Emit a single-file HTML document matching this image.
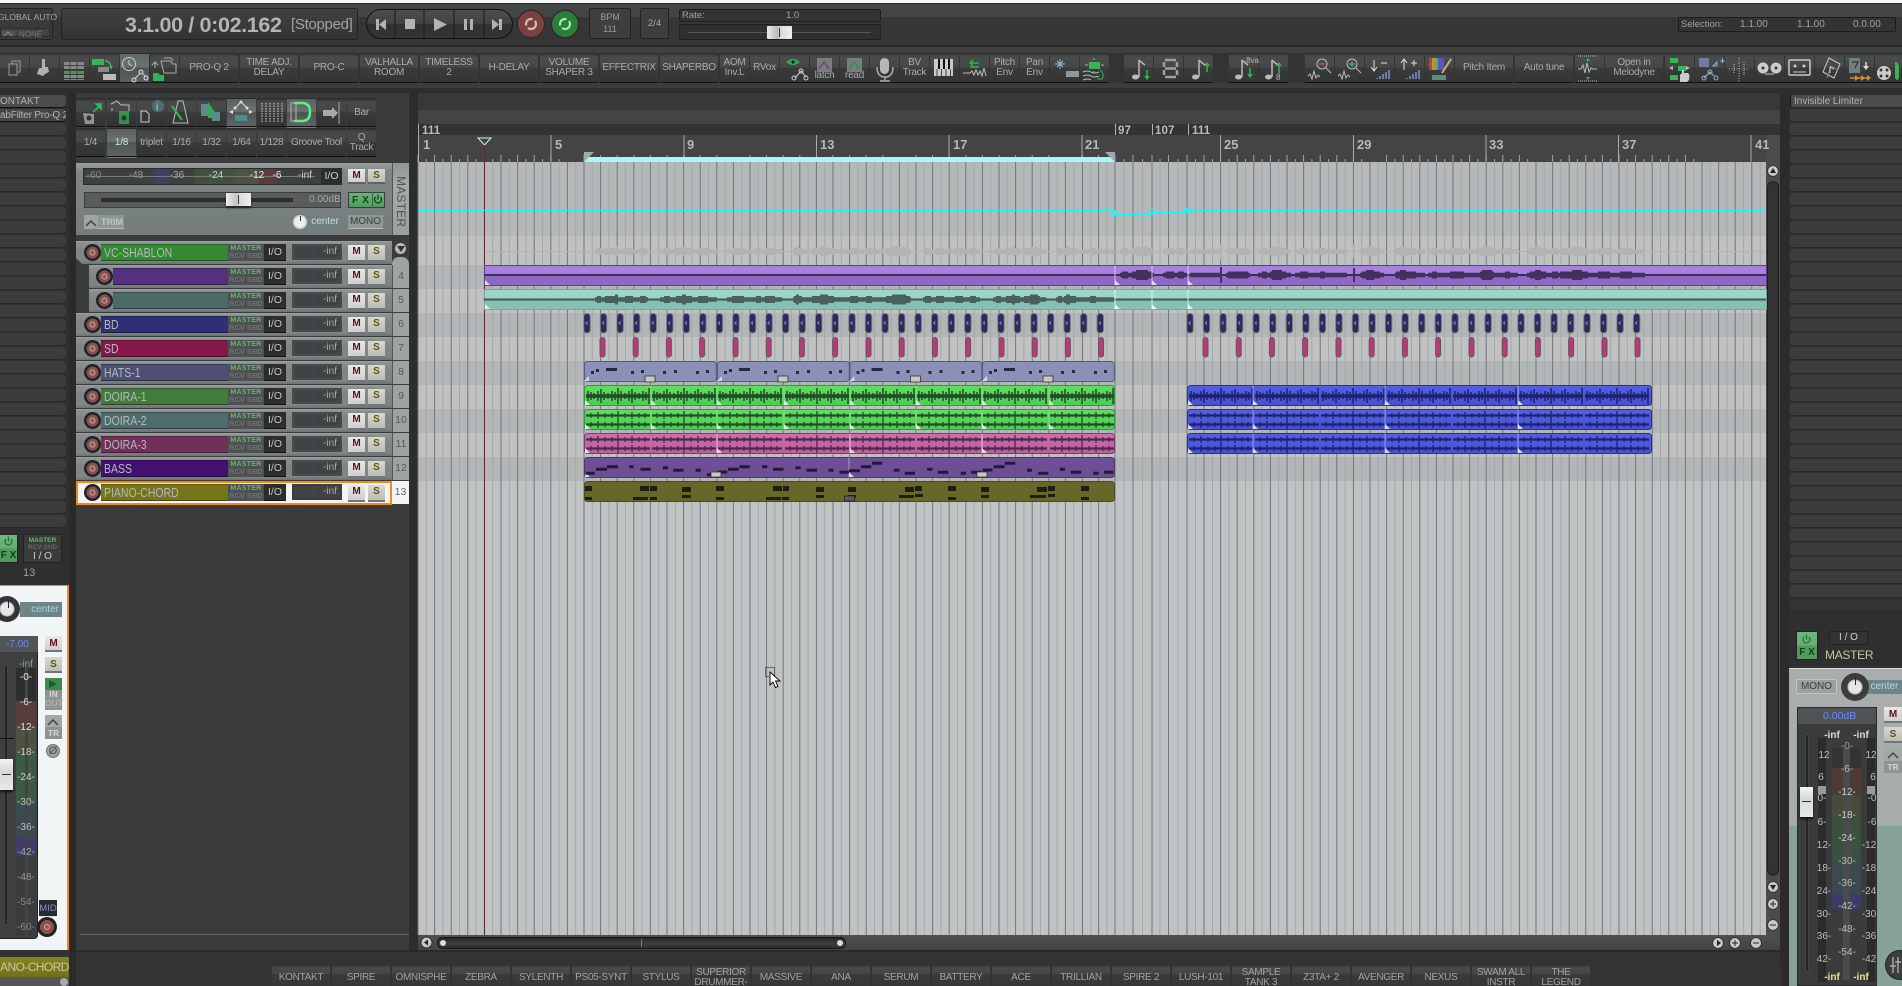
<!DOCTYPE html>
<html><head><meta charset="utf-8"><title>REAPER</title>
<style>
html,body{margin:0;padding:0;background:#333}
#p{position:relative;width:1902px;height:986px;overflow:hidden;background:#333;font-family:"Liberation Sans",sans-serif;color:#a5a8a8}
.a,.t,.b,.r,.g{position:absolute;box-sizing:border-box}
.t{top:53px;height:30px;width:29px;background:linear-gradient(#3a3b3b 0,#4a4c4c 12%,#464848 46%,#3a3b3b 50%,#343535 100%);border-bottom:1px solid #111;border-top:1px solid #2a2a2a;font-size:10px;line-height:10px;letter-spacing:-.25px;text-align:center;display:flex;align-items:center;justify-content:center;white-space:pre;color:#a8acac}
.w{width:58px}
.on{background:linear-gradient(#626868,#6b7272 46%,#4f5454 50%,#5a6060)}
.u{height:29px;background:linear-gradient(#353636 0,#484a4a 12%,#454747 46%,#393a3a 50%,#333 100%);top:98px}
.u.on{background:linear-gradient(#5a6060,#6b7272 46%,#4f5454 50%,#5e6464);box-shadow:0 1px 0 #777}
.v{top:128px}
.b{top:965px;height:24px;width:58px;background:linear-gradient(#2e2e2e 0,#4a4a4a 10%,#454545 35%,#3a3a3a 40%,#363636);font-size:10px;line-height:10px;letter-spacing:-.3px;text-align:center;color:#a0a3a3;padding-top:3px;white-space:pre}
.b1{padding-top:8px}
.r{left:76px;width:333px;height:23px;background:linear-gradient(#9da2a2 0,#8a9090 10%,#7e8484 50%,#818787 85%,#6c7171 100%)}
.k{position:absolute;left:8px;top:3px;width:17px;height:17px;border-radius:50%;background:radial-gradient(circle,#8b5a5a 0 2px,#c8a0a0 2px 3px,#8a4f4f 3px 6px,#222 6px 8.5px)}
.n{position:absolute;left:25px;top:3px;width:127px;height:17px;font-size:12.5px;line-height:17px;padding-left:3px;color:#b4baba;box-sizing:border-box;border-top:1px solid rgba(0,0,0,.25);border-bottom:1px solid rgba(0,0,0,.4);white-space:nowrap}
.n span{display:inline-block;transform:scaleX(.84);transform-origin:left}
.o{position:absolute;left:152px;top:3px;width:36px;height:17px;background:#4d5151;font-size:7px;line-height:7.5px;text-align:center;color:#63b56f;font-weight:bold;letter-spacing:.3px;padding-top:1px;box-sizing:border-box}
.o i{font-style:normal;color:#6e7272;display:block}
.i{position:absolute;left:188px;top:3px;width:22px;height:16px;background:#2d2d2d;color:#c8cccc;font-size:10.5px;line-height:16px;text-align:center;border-bottom:1px solid #111}
.e{position:absolute;left:216px;top:3px;width:50px;height:16px;background:linear-gradient(90deg,#3f4343 0 40%,#444064 40% 46%,#3f4343 46% 70%,#503f3f 70% 74%,#3f4343 74%);border:2px solid #484c4c;border-left-width:3px;box-sizing:border-box;color:#aaa;font-size:10px;line-height:11px;text-align:right;padding-right:3px}
.m,.s{position:absolute;top:4px;width:17px;height:15px;background:linear-gradient(#e8e8e8,#cfcfcf);border-bottom:2px solid #70767a;color:#5d1414;font-weight:bold;font-size:10px;line-height:14px;text-align:center}
.m{left:272px}
.s{left:292px;color:#55561a;background:linear-gradient(#d8d8d0,#bcbcb6)}
.q{position:absolute;left:316px;top:0;width:17px;height:23px;background:#9ea3a3;border-left:1px solid #555;color:#555a5a;font-size:10.5px;line-height:23px;text-align:center;box-sizing:border-box}
.d{position:absolute;left:0;top:0;width:13px;height:24px;background:#3a3b3b}
.g{left:0;width:66px;height:13px;background:#3c3c3c;border-radius:0 4px 4px 0;border-bottom:1px solid #2a2a2a}
.h{position:absolute;box-sizing:border-box;left:1790px;width:112px;height:13px;background:#3c3c3c;border-radius:3px 0 0 3px;border-bottom:1px solid #2a2a2a}
.l{position:absolute;font-size:10px;color:#bdbdbd;white-space:nowrap;transform:translateX(-50%);line-height:10px}
svg{position:absolute;left:0;top:0}
</style></head><body><div id="p">

<!-- top bands -->
<div class="a" style="left:0;top:0;width:1902px;height:3px;background:#f6f7f7"></div>
<div class="a" style="left:0;top:3px;width:1902px;height:1px;background:#222"></div>
<div class="a" style="left:0;top:4px;width:1902px;height:13px;background:#444645"></div>
<div class="a" style="left:0;top:17px;width:1902px;height:28px;background:#363636"></div>
<div class="a" style="left:0;top:45px;width:1902px;height:2px;background:#2b2b2b"></div>
<div class="a" style="left:0;top:47px;width:1902px;height:6px;background:#404040"></div>
<div class="a" style="left:0;top:83px;width:1902px;height:5px;background:#3c3c3c"></div>
<div class="a" style="left:0;top:88px;width:1902px;height:5px;background:#2d2d2d"></div>

<!-- transport -->
<div class="a" style="left:-4px;top:8px;width:57px;height:32px;background:#3a3a3a;border:1px solid #222;border-radius:3px"></div>
<div class="a" style="left:-2px;top:12px;font-size:8.5px;line-height:10px;color:#a5a8a8;white-space:nowrap">GLOBAL AUTO</div>
<div class="a" style="left:0;top:28px;width:50px;height:9px;background:#444;border:1px solid #2b2b2b"></div>
<div class="a" style="left:19px;top:31px;font-size:8px;color:#777;line-height:8px">NONE</div>
<div class="a" style="left:61px;top:8px;width:297px;height:32px;background:linear-gradient(#3f4040,#3a3b3b 50%,#333);border:1px solid #222;border-radius:3px"></div>
<div class="a" style="left:125px;top:13px;font-size:21.5px;line-height:24px;font-weight:bold;color:#b2b5b5;letter-spacing:-.35px;white-space:nowrap">3.1.00 / 0:02.162</div>
<div class="a" style="left:291px;top:15px;font-size:15px;line-height:20px;color:#a0a3a3;letter-spacing:-.3px;white-space:nowrap">[Stopped]</div>
<div class="a" style="left:366px;top:9px;width:147px;height:30px;border-radius:15px;background:linear-gradient(#4d4f4f,#414343 48%,#2f3030 52%,#343535);border:1px solid #111"></div>
<div class="a" style="left:589px;top:8px;width:42px;height:31px;background:#3d3e3e;border:1px solid #222;border-radius:2px;font-size:9px;line-height:12px;text-align:center;padding-top:2px;color:#9a9d9d;box-sizing:border-box">BPM<br>111</div>
<div class="a" style="left:640px;top:8px;width:29px;height:31px;background:#3d3e3e;border:1px solid #222;border-radius:2px;font-size:9.5px;line-height:29px;text-align:center;color:#a5a8a8;box-sizing:border-box">2/4</div>
<div class="a" style="left:679px;top:9px;width:202px;height:13px;background:#333;border:1px solid #1f1f1f;border-radius:2px"></div>
<div class="a" style="left:682px;top:10px;font-size:9.5px;line-height:11px;color:#a0a3a3">Rate:</div>
<div class="a" style="left:786px;top:10px;font-size:9.5px;line-height:11px;color:#a0a3a3">1.0</div>
<div class="a" style="left:679px;top:24px;width:202px;height:16px;background:#303030;border:1px solid #1f1f1f;border-radius:2px"></div>
<div class="a" style="left:688px;top:32px;width:183px;height:1px;background:#555"></div>
<div class="a" style="left:767px;top:26px;width:25px;height:13px;background:linear-gradient(90deg,#eee,#bbb 40%,#ddd 60%,#eee);border-radius:1px"></div>
<div class="a" style="left:779px;top:28px;width:1px;height:9px;background:#333"></div>
<div class="a" style="left:1678px;top:17px;width:218px;height:15px;background:#333;border:1px solid #1d1d1d;border-radius:2px"></div>
<div class="a" style="left:1681px;top:19px;font-size:9.5px;line-height:11px;color:#a0a3a3">Selection:</div>
<div class="a" style="left:1740px;top:19px;font-size:10px;line-height:11px;color:#a0a3a3">1.1.00</div>
<div class="a" style="left:1797px;top:19px;font-size:10px;line-height:11px;color:#a0a3a3">1.1.00</div>
<div class="a" style="left:1853px;top:19px;font-size:10px;line-height:11px;color:#a0a3a3">0.0.00</div>

<!-- main toolbar -->
<div class="t" style="left:0"></div><div class="t" style="left:30px"></div><div class="t" style="left:60px"></div><div class="t" style="left:90px"></div><div class="t on" style="left:120px"></div><div class="t" style="left:150px"></div>
<div class="t w" style="left:180px">PRO-Q 2</div><div class="t w" style="left:240px">TIME ADJ.
DELAY</div><div class="t w" style="left:300px">PRO-C</div><div class="t w" style="left:360px">VALHALLA
ROOM</div><div class="t w" style="left:420px">TIMELESS
2</div><div class="t w" style="left:480px">H-DELAY</div><div class="t w" style="left:540px">VOLUME
SHAPER 3</div><div class="t w" style="left:600px">EFFECTRIX</div><div class="t w" style="left:660px">SHAPERBO</div>
<div class="t" style="left:720px">AOM
Inv.L</div><div class="t" style="left:750px">RVox</div><div class="t" style="left:780px"></div>
<div class="t" style="left:810px;align-items:flex-end;padding-bottom:1px">latch</div><div class="t" style="left:840px;align-items:flex-end;padding-bottom:1px">read</div><div class="t" style="left:870px"></div><div class="t" style="left:900px">BV
Track</div><div class="t" style="left:930px"></div><div class="t" style="left:960px"></div><div class="t" style="left:990px">Pitch
Env</div><div class="t" style="left:1020px">Pan
Env</div><div class="t" style="left:1050px"></div><div class="t" style="left:1080px"></div>
<div class="t" style="left:1124px"></div><div class="t" style="left:1154px"></div><div class="t" style="left:1184px"></div>
<div class="t" style="left:1229px"></div><div class="t" style="left:1259px"></div>
<div class="t" style="left:1305px"></div><div class="t" style="left:1335px"></div><div class="t" style="left:1365px"></div><div class="t" style="left:1395px"></div><div class="t" style="left:1425px"></div>
<div class="t w" style="left:1455px">Pitch Item</div><div class="t w" style="left:1515px">Auto tune</div><div class="t" style="left:1575px"></div><div class="t w" style="left:1605px">Open in
Melodyne</div>
<div class="t" style="left:1665px"></div><div class="t" style="left:1695px"></div><div class="t" style="left:1725px"></div><div class="t" style="left:1755px"></div><div class="t" style="left:1785px"></div><div class="t" style="left:1815px"></div><div class="t" style="left:1845px"></div><div class="t" style="left:1875px"></div>

<!-- left fx list -->
<div class="a" style="left:0;top:93px;width:76px;height:441px;background:#2f2f2f"></div>
<div class="g" style="top:95px;background:#4a4c4c;font-size:10px;line-height:13px;color:#b0b3b3;border-bottom:1px solid #111;white-space:nowrap;overflow:hidden">ONTAKT</div>
<div class="g" style="top:109px;background:#454747;font-size:10px;line-height:13px;color:#b0b3b3;border-bottom:1px solid #111;white-space:nowrap;overflow:hidden;letter-spacing:-.2px">abFilter Pro-Q 2</div>
<div class="g" style="top:123px"></div><div class="g" style="top:137px"></div><div class="g" style="top:151px"></div><div class="g" style="top:165px"></div><div class="g" style="top:179px"></div><div class="g" style="top:193px"></div><div class="g" style="top:207px"></div><div class="g" style="top:221px"></div><div class="g" style="top:235px"></div><div class="g" style="top:249px"></div><div class="g" style="top:263px"></div><div class="g" style="top:277px"></div><div class="g" style="top:291px"></div><div class="g" style="top:305px"></div><div class="g" style="top:319px"></div><div class="g" style="top:333px"></div><div class="g" style="top:347px"></div><div class="g" style="top:361px"></div><div class="g" style="top:375px"></div><div class="g" style="top:389px"></div><div class="g" style="top:403px"></div><div class="g" style="top:417px"></div><div class="g" style="top:431px"></div><div class="g" style="top:445px"></div><div class="g" style="top:459px"></div><div class="g" style="top:473px"></div><div class="g" style="top:487px"></div><div class="g" style="top:501px"></div><div class="g" style="top:515px"></div>

<!-- left strip -->
<div class="a" style="left:0;top:530px;width:68px;height:55px;background:#2f2f2f"></div>
<div class="a" style="left:0;top:534px;width:18px;height:29px;background:linear-gradient(#6fb77a 0,#68ad72 50%,#4f9c5e 50%);border:1px solid #222;border-left:0;font-size:10px;line-height:13px;color:#123f1c;text-align:center;font-weight:bold;box-sizing:border-box;padding-top:14px">F X</div>
<div class="a" style="left:23px;top:534px;width:39px;height:29px;background:#3a3c3c;border:1px solid #222;box-sizing:border-box;text-align:center;font-size:6.5px;line-height:7px;color:#63b56f;font-weight:bold;padding-top:2px">MASTER<br><span style="color:#666">RCV SND</span><div style="color:#d0d0d0;font-size:10px;line-height:11px;font-weight:normal">I / O</div></div>
<div class="a" style="left:23px;top:567px;font-size:11px;line-height:13px;color:#9da3a3">13</div>
<div class="a" style="left:0;top:585px;width:69px;height:372px;background:#f1f5f5;border-right:2px solid #f58a12;border-top:1px solid #f58a12;box-sizing:border-box"></div>
<div class="a" style="left:20px;top:602px;width:42px;height:15px;background:#6f8484;color:#a9d3ec;font-size:10px;line-height:15px;text-align:right;padding-right:3px;box-sizing:border-box">center</div>
<div class="a" style="left:-6px;top:596px;width:26px;height:26px;border-radius:50%;background:radial-gradient(circle,#e6e6e6 0 6px,#bbb 7px,#333 8px)"></div>
<div class="a" style="left:8px;top:600px;width:1px;height:8px;background:#224"></div>
<div class="a" style="left:0;top:636px;width:38px;height:303px;background:#3d4040;border-right:1px solid #222;border-bottom:1px solid #222;border-radius:0 0 4px 0;box-sizing:border-box"></div>
<div class="a" style="left:0;top:636px;width:38px;height:16px;background:#525555"></div>
<div class="a" style="left:6px;top:640px;font-size:10px;line-height:10px;color:#6a8ae8">-7.00</div>
<div class="a" style="left:4px;top:665px;width:4px;height:260px;background:#232323;border:1px solid #444;box-sizing:border-box"></div>
<div class="a" style="left:0;top:738px;width:14px;height:1px;background:#111"></div>
<div class="a" style="left:0;top:759px;width:13px;height:31px;background:linear-gradient(#f4f4f4,#d8d8d8 40%,#e8e8e8);box-shadow:0 2px 2px #111"></div>
<div class="a" style="left:2px;top:774px;width:9px;height:1px;background:#333"></div>
<div class="a" style="left:16px;top:668px;width:20px;height:268px;background:linear-gradient(#2e2e2e 0 33px,#5a3c3c 33px 59px,#4f5240 59px 85px,#3d5a44 85px 135px,#3c4a50 135px 170px,#3e3e68 170px 188px,#3a3d3d 188px)"></div>
<div class="a" style="left:25px;top:668px;width:3px;height:268px;background:#444"></div>
<div class="l" style="left:26px;top:660px;color:#999">-inf</div><div class="l" style="left:26px;top:673px;color:#eee">-0-</div><div class="l" style="left:26px;top:698px;color:#e0e0e0">-6-</div><div class="l" style="left:26px;top:723px;color:#e0e0e0">-12-</div><div class="l" style="left:26px;top:748px;color:#ccc">-18-</div><div class="l" style="left:26px;top:773px;color:#ccc">-24-</div><div class="l" style="left:26px;top:798px;color:#bbb">-30-</div><div class="l" style="left:26px;top:823px;color:#bbb">-36-</div><div class="l" style="left:26px;top:848px;color:#aaa">-42-</div><div class="l" style="left:26px;top:873px;color:#999">-48-</div><div class="l" style="left:26px;top:898px;color:#888">-54-</div><div class="l" style="left:26px;top:923px;color:#888">-60-</div>
<div class="a" style="left:39px;top:900px;width:18px;height:17px;background:#2a2a2a;color:#7f93c9;font-size:9.5px;line-height:17px;text-align:center;border-bottom:1px solid #ddd;box-sizing:border-box">MID</div>
<div class="a" style="left:37px;top:917px;width:20px;height:20px;border-radius:50%;background:radial-gradient(circle,#8b5a5a 0 2px,#c8a0a0 2px 3px,#8a4f4f 3px 7px,#222 7px 10px)"></div>
<div class="a" style="left:45px;top:636px;width:17px;height:16px;background:linear-gradient(#e8e8e8,#cfcfcf);border-bottom:2px solid #70767a;color:#5d1414;font-weight:bold;font-size:10px;line-height:15px;text-align:center;box-sizing:border-box">M</div>
<div class="a" style="left:45px;top:657px;width:17px;height:16px;background:linear-gradient(#d8d8d0,#bcbcb6);border-bottom:2px solid #70767a;color:#55561a;font-weight:bold;font-size:10px;line-height:15px;text-align:center;box-sizing:border-box">S</div>
<div class="a" style="left:45px;top:678px;width:17px;height:12px;background:#3d8a4b"></div>
<div class="a" style="left:45px;top:690px;width:17px;height:20px;background:#8e9494;color:#d0d4d4;font-size:8.5px;line-height:9px;text-align:center;font-weight:bold">IN<br><span style="color:#adb2b2">OUT</span></div>
<div class="a" style="left:45px;top:715px;width:17px;height:12px;background:#a3a8a8"></div>
<div class="a" style="left:45px;top:727px;width:17px;height:12px;background:#8e9494;color:#d4d6d6;font-size:8.5px;line-height:12px;text-align:center;font-weight:bold">TR</div>
<div class="a" style="left:46px;top:744px;width:14px;height:14px;border-radius:50%;background:#9aa0a0;border:1px solid #777;box-sizing:border-box;color:#555;font-size:11px;line-height:12px;text-align:center">Ø</div>
<div class="a" style="left:69px;top:93px;width:7px;height:893px;background:#2a2a2a"></div>

<!-- tcp -->
<div class="a" style="left:76px;top:93px;width:342px;height:857px;background:#3a3b3b"></div>
<div class="a" style="left:80px;top:934px;width:330px;height:1px;background:#666"></div>
<div class="a" style="left:409px;top:93px;width:9px;height:857px;background:#2d2d2d"></div>
<div class="t u" style="left:76px"></div><div class="t u" style="left:107px"></div><div class="t u" style="left:137px"></div><div class="t u" style="left:167px"></div><div class="t u" style="left:197px"></div><div class="t u on" style="left:227px"></div><div class="t u" style="left:257px"></div><div class="t u on" style="left:287px"></div><div class="t u" style="left:317px"></div><div class="t u" style="left:347px">Bar</div>
<div class="t u v" style="left:76px">1/4</div><div class="t u v on" style="left:107px;color:#c5ecd0">1/8</div><div class="t u v" style="left:137px">triplet</div><div class="t u v" style="left:167px">1/16</div><div class="t u v" style="left:197px">1/32</div><div class="t u v" style="left:227px">1/64</div><div class="t u v" style="left:257px">1/128</div><div class="t u v" style="left:287px;width:59px">Groove Tool</div><div class="t u v" style="left:347px">Q
Track</div>

<!-- master -->
<div class="a" style="left:76px;top:163px;width:333px;height:72px;background:linear-gradient(#9ba0a0 0,#7e8686 12%,#757c7c 100%)"></div>
<div class="a" style="left:83px;top:168px;width:259px;height:17px;background:linear-gradient(90deg,#3c4040 0 27%,#3f3f60 27% 33%,#3c4040 33% 43%,#3f523f 43% 58%,#4f5240 58% 68%,#5a3c3c 68% 75%,#3c4040 75%);border:1px solid #2b2b2b;box-sizing:border-box"></div>
<div class="a" style="left:85px;top:176px;width:230px;height:1px;background:#777"></div>
<div class="l" style="left:94px;top:171px;color:#888">-60</div><div class="l" style="left:136px;top:171px;color:#999">-48</div><div class="l" style="left:177px;top:171px;color:#aaa">-36</div><div class="l" style="left:216px;top:171px;color:#ccc">-24</div><div class="l" style="left:257px;top:171px;color:#eee">-12</div><div class="l" style="left:277px;top:171px;color:#eee">-6</div><div class="l" style="left:305px;top:171px;color:#ccc">-inf</div>
<div class="a" style="left:321px;top:168px;width:21px;height:17px;background:#2d2d2d;color:#d0d0d0;font-size:10.5px;line-height:17px;text-align:center">I/O</div>
<div class="a" style="left:348px;top:169px;width:17px;height:15px;background:linear-gradient(#e8e8e8,#cfcfcf);border-bottom:2px solid #5f6565;color:#5d1414;font-weight:bold;font-size:10px;line-height:14px;text-align:center">M</div>
<div class="a" style="left:368px;top:169px;width:17px;height:15px;background:linear-gradient(#d8d8d0,#bcbcb6);border-bottom:2px solid #5f6565;color:#55561a;font-weight:bold;font-size:10px;line-height:14px;text-align:center">S</div>
<div class="a" style="left:392px;top:163px;width:17px;height:72px;background:linear-gradient(#8e9595 0,#a5aaaa 30%,#9ba0a0);border-left:1px solid #555;box-sizing:border-box"></div>
<div class="a" style="left:394px;top:176px;writing-mode:vertical-rl;font-size:12px;line-height:13px;color:#4e5252;letter-spacing:.2px">MASTER</div>
<div class="a" style="left:84px;top:192px;width:257px;height:16px;background:#585c5c;border:1px solid #3a3d3d;box-sizing:border-box"></div>
<div class="a" style="left:101px;top:198px;width:192px;height:4px;background:#2c2c2c"></div>
<div class="a" style="left:226px;top:193px;width:25px;height:13px;background:linear-gradient(90deg,#eee,#c4c4c4 40%,#ddd 60%,#eee);box-shadow:0 2px 2px #222"></div>
<div class="a" style="left:238px;top:195px;width:1px;height:9px;background:#333"></div>
<div class="a" style="left:309px;top:194px;font-size:10px;line-height:12px;color:#a9a9a9">0.00dB</div>
<div class="a" style="left:348px;top:192px;width:37px;height:16px;background:linear-gradient(#6bb47a,#4f9c5e);border:1px solid #3a3d3d;color:#123f1c;font-weight:bold;font-size:10px;line-height:15px;padding-left:3px;box-sizing:border-box;letter-spacing:.6px">F X</div>
<div class="a" style="left:372px;top:192px;width:1px;height:16px;background:#3a6a48"></div>
<div class="a" style="left:84px;top:215px;width:40px;height:14px;background:#8e9595;border-bottom:1px solid #b4b9b9;color:#c0c4c4;font-size:9px;line-height:14px;padding-left:17px;box-sizing:border-box;font-weight:bold">TRIM</div>
<div class="a" style="left:84px;top:215px;width:14px;height:14px;background:#9fa4a4"></div>
<div class="a" style="left:300px;top:215px;width:41px;height:14px;background:#6f8080;color:#d0d8d8;font-size:10px;line-height:14px;text-align:right;padding-right:2px;box-sizing:border-box;border-radius:6px 0 0 6px">center</div>
<div class="a" style="left:292px;top:214px;width:16px;height:16px;border-radius:50%;background:radial-gradient(circle,#eee 0 5px,#bbb 7px,#555 8px)"></div>
<div class="a" style="left:300px;top:216px;width:1px;height:5px;background:#333"></div>
<div class="a" style="left:348px;top:215px;width:35px;height:14px;background:#8f9797;border-bottom:1px solid #b4b9b9;color:#3b4040;font-size:10px;line-height:14px;text-align:center">MONO</div>

<!-- tracks -->
<div class="r" style="top:241px"><div class="k"></div><div class="n" style="background:#338a33"><span>VC-SHABLON</span></div><div class="o">MASTER<i>RCV SND</i></div><div class="i">I/O</div><div class="e">-inf</div><div class="m">M</div><div class="s">S</div><div class="q" style="background:#3a3b3b;border:0"></div></div>
<div class="a" style="left:76px;top:258px;width:0;height:0;border-top:7px solid transparent;border-left:7px solid #3a3b3b"></div>
<div class="a" style="left:393px;top:241px;width:15px;height:15px;border-radius:50%;background:#3a3b3b"></div>
<div class="a" style="left:395px;top:243px;width:11px;height:11px;border-radius:50%;background:#b5b8b8"></div>
<div class="a" style="left:392px;top:257px;width:17px;height:8px;background:#9ea3a3;border-radius:7px 7px 0 0"></div>
<div class="r" style="top:265px"><div class="d"></div><div class="k" style="left:20px"></div><div class="n" style="left:37px;width:115px;background:#54317f"></div><div class="o">MASTER<i>RCV SND</i></div><div class="i">I/O</div><div class="e">-inf</div><div class="m">M</div><div class="s">S</div><div class="q">4</div></div>
<div class="r" style="top:289px"><div class="d"></div><div class="k" style="left:20px"></div><div class="n" style="left:37px;width:115px;background:#4b6a68"></div><div class="o">MASTER<i>RCV SND</i></div><div class="i">I/O</div><div class="e">-inf</div><div class="m">M</div><div class="s">S</div><div class="q">5</div></div>
<div class="r" style="top:313px"><div class="k"></div><div class="n" style="background:#2e3073"><span>BD</span></div><div class="o">MASTER<i>RCV SND</i></div><div class="i">I/O</div><div class="e">-inf</div><div class="m">M</div><div class="s">S</div><div class="q">6</div></div>
<div class="r" style="top:337px"><div class="k"></div><div class="n" style="background:#851848"><span>SD</span></div><div class="o">MASTER<i>RCV SND</i></div><div class="i">I/O</div><div class="e">-inf</div><div class="m">M</div><div class="s">S</div><div class="q">7</div></div>
<div class="r" style="top:361px"><div class="k"></div><div class="n" style="background:#4d4f75"><span>HATS-1</span></div><div class="o">MASTER<i>RCV SND</i></div><div class="i">I/O</div><div class="e">-inf</div><div class="m">M</div><div class="s">S</div><div class="q">8</div></div>
<div class="r" style="top:385px"><div class="k"></div><div class="n" style="background:#437b3c"><span>DOIRA-1</span></div><div class="o">MASTER<i>RCV SND</i></div><div class="i">I/O</div><div class="e">-inf</div><div class="m">M</div><div class="s">S</div><div class="q">9</div></div>
<div class="r" style="top:409px"><div class="k"></div><div class="n" style="background:#4f6c6c"><span>DOIRA-2</span></div><div class="o">MASTER<i>RCV SND</i></div><div class="i">I/O</div><div class="e">-inf</div><div class="m">M</div><div class="s">S</div><div class="q">10</div></div>
<div class="r" style="top:433px"><div class="k"></div><div class="n" style="background:#713058"><span>DOIRA-3</span></div><div class="o">MASTER<i>RCV SND</i></div><div class="i">I/O</div><div class="e">-inf</div><div class="m">M</div><div class="s">S</div><div class="q">11</div></div>
<div class="r" style="top:457px"><div class="k"></div><div class="n" style="background:#430f70"><span>BASS</span></div><div class="o">MASTER<i>RCV SND</i></div><div class="i">I/O</div><div class="e">-inf</div><div class="m">M</div><div class="s">S</div><div class="q">12</div></div>
<div class="r" style="top:481px;background:#f2f5f5"><div class="k"></div><div class="n" style="background:#75761a"><span>PIANO-CHORD</span></div><div class="o" style="background:#4d5151">MASTER<i>RCV SND</i></div><div class="i">I/O</div><div class="e" style="border-color:#3a3e3e">-inf</div><div class="m">M</div><div class="s">S</div><div class="q" style="background:#f2f5f5;border:0;color:#667">13</div></div>
<div class="a" style="left:76px;top:481px;width:316px;height:24px;border:2px solid #f58a12;box-sizing:border-box"></div>

<!-- arrange top + ruler bg -->
<div class="a" style="left:418px;top:93px;width:1362px;height:17px;background:#383838"></div>
<div class="a" style="left:418px;top:110px;width:1362px;height:14px;background:#444"></div>
<div class="a" style="left:418px;top:124px;width:1362px;height:11px;background:#333"></div>
<div class="a" style="left:418px;top:135px;width:1348px;height:27px;background:#444"></div>
<div class="a" style="left:1766px;top:135px;width:14px;height:800px;background:#4c4c4c"></div>
<div class="a" style="left:418px;top:935px;width:1362px;height:15px;background:linear-gradient(#4f4f4f,#444)"></div>
<div class="a" style="left:0;top:950px;width:1782px;height:15px;background:#333"></div>
<div class="a" style="left:69px;top:950px;width:1713px;height:2px;background:#2a2a2a"></div>

<!-- right panel -->
<div class="a" style="left:1780px;top:93px;width:122px;height:575px;background:#2f2f2f"></div>
<div class="a" style="left:1780px;top:93px;width:9px;height:893px;background:#2b2b2b"></div>
<div class="h" style="top:95px;background:#4a4c4c;border-left:1px solid #111;font-size:10px;line-height:13px;color:#b0b3b3;padding-left:3px;white-space:nowrap">Invisible Limiter</div>
<div class="h" style="top:109px"></div><div class="h" style="top:123px"></div><div class="h" style="top:137px"></div><div class="h" style="top:151px"></div><div class="h" style="top:165px"></div><div class="h" style="top:179px"></div><div class="h" style="top:193px"></div><div class="h" style="top:207px"></div><div class="h" style="top:221px"></div><div class="h" style="top:235px"></div><div class="h" style="top:249px"></div><div class="h" style="top:263px"></div><div class="h" style="top:277px"></div><div class="h" style="top:291px"></div><div class="h" style="top:305px"></div><div class="h" style="top:319px"></div><div class="h" style="top:333px"></div><div class="h" style="top:347px"></div><div class="h" style="top:361px"></div><div class="h" style="top:375px"></div><div class="h" style="top:389px"></div><div class="h" style="top:403px"></div><div class="h" style="top:417px"></div><div class="h" style="top:431px"></div><div class="h" style="top:445px"></div><div class="h" style="top:459px"></div><div class="h" style="top:473px"></div><div class="h" style="top:487px"></div><div class="h" style="top:501px"></div><div class="h" style="top:515px"></div><div class="h" style="top:529px"></div><div class="h" style="top:543px"></div><div class="h" style="top:557px"></div><div class="h" style="top:571px"></div><div class="h" style="top:585px"></div><div class="h" style="top:599px;background:#333"></div>
<div class="a" style="left:1796px;top:631px;width:22px;height:29px;background:linear-gradient(#6fb77a,#68ad72 50%,#4f9c5e 50%);border:1px solid #222;box-sizing:border-box;color:#123f1c;font-size:10px;font-weight:bold;line-height:12px;text-align:center;padding-top:15px">F X</div>
<div class="a" style="left:1829px;top:631px;width:39px;height:14px;background:#333;border:1px solid #222;box-sizing:border-box;color:#d0d0d0;font-size:10px;line-height:12px;text-align:center">I / O</div>
<div class="a" style="left:1825px;top:648px;font-size:12px;line-height:14px;color:#c6c6a4;letter-spacing:-.3px">MASTER</div>
<div class="a" style="left:1789px;top:668px;width:113px;height:318px;background:linear-gradient(#a8adad 0,#a6abab 157px,#86a298 157px);border-top:1px solid #d6d9d9;box-sizing:border-box"></div>
<div class="a" style="left:1796px;top:679px;width:41px;height:15px;background:#9aa1a1;border:1px solid #c0c4c4;box-sizing:border-box;color:#3a3f3f;font-size:10px;line-height:13px;text-align:center">MONO</div>
<div class="a" style="left:1867px;top:680px;width:35px;height:14px;background:#6f8484;color:#b5d8f0;font-size:10px;line-height:14px;text-align:center">center</div>
<div class="a" style="left:1841px;top:673px;width:28px;height:28px;border-radius:50%;background:radial-gradient(circle,#e6e6e6 0 6px,#bbb 7px,#3c3c3c 8px)"></div>
<div class="a" style="left:1855px;top:677px;width:1px;height:8px;background:#224"></div>
<div class="a" style="left:1797px;top:707px;width:80px;height:279px;background:#3a3c3c;border:1px solid #2a2a2a;box-sizing:border-box"></div>
<div class="a" style="left:1798px;top:708px;width:78px;height:16px;background:#4f5353"></div>
<div class="a" style="left:1823px;top:710px;font-size:10.5px;line-height:12px;color:#6a8aff">0.00dB</div>
<div class="a" style="left:1805px;top:734px;width:4px;height:238px;background:#232323;border:1px solid #444;box-sizing:border-box"></div>
<div class="a" style="left:1800px;top:787px;width:13px;height:30px;background:linear-gradient(#f4f4f4,#d8d8d8 40%,#e8e8e8);box-shadow:0 2px 2px #111"></div>
<div class="a" style="left:1802px;top:801px;width:9px;height:1px;background:#333"></div>
<div class="a" style="left:1818px;top:738px;width:8px;height:244px;background:#2b2b2b"></div>
<div class="a" style="left:1867px;top:738px;width:8px;height:244px;background:#2b2b2b"></div>
<div class="a" style="left:1818px;top:786px;width:8px;height:8px;background:#999"></div>
<div class="a" style="left:1867px;top:786px;width:8px;height:8px;background:#999"></div>
<div class="a" style="left:1832px;top:748px;width:29px;height:232px;background:linear-gradient(#333 0 20px,#4f3a3a 20px 47px,#474c3a 47px 70px,#3a5040 70px 114px,#3c4a50 114px 145px,#3c3c66 145px 161px,#3a3c3c 161px)"></div>
<div class="a" style="left:1843px;top:748px;width:7px;height:232px;background:#484c4c"></div>
<div class="l" style="left:1832px;top:731px;color:#ddd;font-weight:bold">-inf</div><div class="l" style="left:1861px;top:731px;color:#ddd;font-weight:bold">-inf</div>
<div class="l" style="left:1847px;top:742px;color:#999">-0-</div><div class="l" style="left:1847px;top:765px;color:#bbb">-6-</div><div class="l" style="left:1847px;top:788px;color:#ccc">-12-</div><div class="l" style="left:1847px;top:811px;color:#ccc">-18-</div><div class="l" style="left:1847px;top:834px;color:#ccc">-24-</div><div class="l" style="left:1847px;top:857px;color:#bbb">-30-</div><div class="l" style="left:1847px;top:879px;color:#bbb">-36-</div><div class="l" style="left:1847px;top:902px;color:#bbb">-42-</div><div class="l" style="left:1847px;top:925px;color:#bbb">-48-</div><div class="l" style="left:1847px;top:948px;color:#bbb">-54-</div>
<div class="l" style="left:1824px;top:751px">12</div><div class="l" style="left:1821px;top:773px">6</div><div class="l" style="left:1822px;top:794px">0-</div><div class="l" style="left:1822px;top:818px">6-</div><div class="l" style="left:1824px;top:841px">12-</div><div class="l" style="left:1824px;top:864px">18-</div><div class="l" style="left:1824px;top:887px">24-</div><div class="l" style="left:1824px;top:910px">30-</div><div class="l" style="left:1824px;top:932px">36-</div><div class="l" style="left:1824px;top:955px">42-</div>
<div class="l" style="left:1871px;top:751px">12</div><div class="l" style="left:1873px;top:773px">6</div><div class="l" style="left:1872px;top:794px">-0</div><div class="l" style="left:1872px;top:818px">-6</div><div class="l" style="left:1869px;top:841px">-12</div><div class="l" style="left:1869px;top:864px">-18</div><div class="l" style="left:1869px;top:887px">-24</div><div class="l" style="left:1869px;top:910px">-30</div><div class="l" style="left:1869px;top:932px">-36</div><div class="l" style="left:1869px;top:955px">-42</div>
<div class="l" style="left:1832px;top:973px;color:#e6e68a;font-weight:bold">-inf</div><div class="l" style="left:1861px;top:973px;color:#e6e68a;font-weight:bold">-inf</div>
<div class="a" style="left:1884px;top:707px;width:18px;height:16px;background:linear-gradient(#e8e8e8,#cfcfcf);border-bottom:2px solid #70767a;color:#5d1414;font-weight:bold;font-size:10px;line-height:15px;text-align:center;box-sizing:border-box">M</div>
<div class="a" style="left:1884px;top:727px;width:18px;height:16px;background:linear-gradient(#d8d8d0,#bcbcb6);border-bottom:2px solid #70767a;color:#55561a;font-weight:bold;font-size:10px;line-height:15px;text-align:center;box-sizing:border-box">S</div>
<div class="a" style="left:1884px;top:748px;width:18px;height:13px;background:#a3a8a8"></div>
<div class="a" style="left:1884px;top:761px;width:18px;height:12px;background:#8e9494;color:#d4d6d6;font-size:8.5px;line-height:12px;text-align:center;font-weight:bold">TR</div>
<div class="a" style="left:1885px;top:950px;width:30px;height:30px;border-radius:50%;background:#3c3f3f;border:1px solid #222;box-sizing:border-box"></div>

<!-- bottom buttons -->
<div class="a" style="left:0;top:965px;width:1782px;height:21px;background:#333"></div>
<div class="a" style="left:0;top:957px;width:69px;height:20px;background:linear-gradient(#85851e,#70701a);color:#c8c8a8;font-size:12px;line-height:20px;letter-spacing:-.6px;white-space:nowrap;overflow:hidden"><span style="margin-left:-10px">PIANO-CHORD</span></div>
<div class="a" style="left:0;top:977px;width:69px;height:9px;background:#555"></div>
<div class="a" style="left:60px;top:978px;width:8px;height:8px;border-radius:50%;background:#aaa"></div>
<div class="a" style="left:69px;top:950px;width:7px;height:36px;background:#2a2a2a"></div>
<div class="b b1" style="left:272px">KONTAKT</div><div class="b b1" style="left:332px">SPIRE</div><div class="b b1" style="left:392px">OMNISPHE</div><div class="b b1" style="left:452px">ZEBRA</div><div class="b b1" style="left:512px">SYLENTH</div><div class="b b1" style="left:572px">PS05-SYNT</div><div class="b b1" style="left:632px">STYLUS</div><div class="b" style="left:692px">SUPERIOR
DRUMMER-</div><div class="b b1" style="left:752px">MASSIVE</div><div class="b b1" style="left:812px">ANA</div><div class="b b1" style="left:872px">SERUM</div><div class="b b1" style="left:932px">BATTERY</div><div class="b b1" style="left:992px">ACE</div><div class="b b1" style="left:1052px">TRILLIAN</div><div class="b b1" style="left:1112px">SPIRE 2</div><div class="b b1" style="left:1172px">LUSH-101</div><div class="b" style="left:1232px">SAMPLE
TANK 3</div><div class="b b1" style="left:1292px">Z3TA+ 2</div><div class="b b1" style="left:1352px">AVENGER</div><div class="b b1" style="left:1412px">NEXUS</div><div class="b" style="left:1472px">SWAM ALL
INSTR</div><div class="b" style="left:1532px">THE
LEGEND</div>

<!-- arrange svg -->
<svg width="1902" height="986" viewBox="0 0 1902 986" xmlns="http://www.w3.org/2000/svg" font-family="Liberation Sans, sans-serif">
<defs>
<path id="gd" d="M0 162v773m16.6-773v773m16.6-773v773m16.6-773v773m16.6-773v773m16.6-773v773m16.6-773v773m16.6-773v773m16.6-773v773m16.6-773v773" fill="none" stroke="#70767a" stroke-width="1"/>
<path id="gl" d="M8.3 162v773m16.6-773v773m16.6-773v773m16.6-773v773m16.6-773v773m16.6-773v773m16.6-773v773m16.6-773v773m16.6-773v773m16.6-773v773" fill="none" stroke="#a4a8a8" stroke-width="1"/>
<path id="tk" d="M0 155v7m8.3-3v3m8.3-7v7m8.3-3v3m8.3-7v7m8.3-3v3m8.3-7v7m8.3-3v3m8.3-7v7m8.3-3v3m8.3-7v7m8.3-3v3m8.3-7v7m8.3-3v3m8.3-7v7m8.3-3v3m8.3-7v7m8.3-3v3" fill="none" stroke="#a0a4a4" stroke-width="1"/>
<g id="b1"><rect x="-.25" y=".5" width="6.500" height="19.500" rx="3" fill="#2b2a58" stroke="#7a8088" stroke-width="1"/><path d="M3.500 7.500l-2.500 2.500 2.500 2.500z" fill="#7a78a8"/></g>
<g id="b4"><use href="#b1"/><use href="#b1" x="16.55"/><use href="#b1" x="33.1"/><use href="#b1" x="49.65"/></g>
<g id="b16"><use href="#b4"/><use href="#b4" x="66.2"/><use href="#b4" x="132.4"/><use href="#b4" x="198.6"/></g>
<g id="s1"><rect x="0" y=".5" width="5" height="19.500" rx="2.500" fill="#b33d77" stroke="#6a5060" stroke-width="1"/></g>
<g id="s4"><use href="#s1"/><use href="#s1" x="33.2"/><use href="#s1" x="66.4"/><use href="#s1" x="99.6"/></g>
<g id="h1"><rect x=".5" y=".5" width="131.8" height="20" rx="3" fill="#8a90b8" stroke="#565a7c"/><path d="M0 20l5-5v5z" fill="#d4d6ec"/><path d="M7 10h3v3H7zM12 8h3v3h-3zM22 7h11v3H22zM47 10h3v3h-3zM57 9h3v3h-3zM79 10h3v3h-3zM90 9h3v3h-3zM112 10h3v3h-3zM122 9h3v3h-3z" fill="#26283c"/><rect x="61" y="15" width="10" height="6" fill="#c8c8c8" stroke="#333" stroke-width=".8"/></g>
<g id="w1" stroke="currentColor" fill="none"><path d="M1 10h64" stroke-width="3.500"/><path stroke-width="1.500" d="M3 5v10M6 6v8M9 7v6M13 5v10M16 3v14M19 6v8M23 7v6M27 5v10M30 6v8M33 2v16M36 5v10M40 7v6M44 5v10M47 3v14M50 6v8M54 7v6M58 5v10M61 6v8M64 2v16"/></g>
<g id="w2" stroke="currentColor" fill="none"><path d="M1 5.500h64M1 14.500h64" stroke-width="2.200"/><path stroke-width="1.300" d="M6 3v5M13 2v7M20 3v5M27 3v5M33 1v9M40 3v5M47 2v7M54 3v5M60 3v5M6 12v5M13 11v7M20 12v5M27 12v5M33 10v9M40 12v5M47 11v7M54 12v5M60 12v5"/></g>
<g id="vo" fill="none" stroke="currentColor"><path stroke-width="1" d="M485 0H1766"/><path stroke-width="4.500" d="M595 0h53M660 0h57M727 0h55M793 0h118M923 0h57M993 0h53M1056 0h58"/><path stroke-width="7" d="M597 0h4M605 0h12M625 0h8M640 0h6M664 0h6M676 0h16M698 0h10M732 0h12M756 0h5M765 0h10M794 0h8M812 0h22M850 0h8M866 0h6M886 0h24M925 0h6M936 0h8M955 0h8M970 0h6M996 0h5M1006 0h14M1024 0h16M1058 0h4M1064 0h12M1090 0h6"/><path stroke-width="10" d="M615 0h3M682 0h4M796 0h3M820 0h8M892 0h14M1012 0h3M1030 0h8M1066 0h4"/></g>
<g id="vp" fill="none" stroke="currentColor"><path stroke-width="4.500" d="M1120 0h34M1163 0h24M1190 0h30M1226 0h24M1258 0h33M1295 0h52M1360 0h24M1395 0h30M1428 0h90M1527 0h118"/><path stroke-width="7" d="M1122 0h6M1132 0h20M1166 0h8M1178 0h6M1228 0h20M1262 0h5M1270 0h16M1300 0h8M1320 0h5M1362 0h18M1396 0h20M1432 0h5M1450 0h14M1480 0h14M1505 0h5M1530 0h16M1552 0h6M1560 0h28M1598 0h12M1620 0h12"/><path stroke-width="10" d="M1136 0h12M1272 0h10M1366 0h8M1400 0h6M1482 0h10M1535 0h6M1572 0h10"/><path stroke-width="2" d="M1221 -8v16M1354 -7v14"/></g>
<linearGradient id="gg" x1="0" y1="0" x2="0" y2="1"><stop offset="0" stop-color="#60dd60"/><stop offset="1" stop-color="#49ce50"/></linearGradient>
<linearGradient id="gb" x1="0" y1="0" x2="0" y2="1"><stop offset="0" stop-color="#5560e0"/><stop offset="1" stop-color="#4650d0"/></linearGradient>
<linearGradient id="gp" x1="0" y1="0" x2="0" y2="1"><stop offset="0" stop-color="#cc70aa"/><stop offset="1" stop-color="#be5c9c"/></linearGradient>
<linearGradient id="gv" x1="0" y1="0" x2="0" y2="1"><stop offset="0" stop-color="#a880de"/><stop offset=".5" stop-color="#a880de"/><stop offset=".5" stop-color="#8f68c6"/><stop offset="1" stop-color="#8f68c6"/></linearGradient>
<linearGradient id="gt" x1="0" y1="0" x2="0" y2="1"><stop offset="0" stop-color="#9dd6c8"/><stop offset=".5" stop-color="#9dd6c8"/><stop offset=".5" stop-color="#86bfb3"/><stop offset="1" stop-color="#86bfb3"/></linearGradient>
<linearGradient id="gs" x1="0" y1="0" x2="0" y2="1"><stop offset="0" stop-color="#222"/><stop offset=".5" stop-color="#3f3f3f"/><stop offset="1" stop-color="#2a2a2a"/></linearGradient>
</defs>

<!-- lane backgrounds -->
<rect x="418" y="162" width="1348" height="74" fill="#b4b8b8"/>
<rect x="418" y="236" width="1348" height="29" fill="#c0c2c2"/>
<rect x="418" y="265" width="1348" height="24" fill="#b3b6b6"/>
<rect x="418" y="289" width="1348" height="24" fill="#c0c2c2"/>
<rect x="418" y="313" width="1348" height="24" fill="#b3b6b6"/>
<rect x="418" y="337" width="1348" height="24" fill="#c0c2c2"/>
<rect x="418" y="361" width="1348" height="24" fill="#b3b6b6"/>
<rect x="418" y="385" width="1348" height="24" fill="#c0c2c2"/>
<rect x="418" y="409" width="1348" height="24" fill="#b3b6b6"/>
<rect x="418" y="433" width="1348" height="24" fill="#c0c2c2"/>
<rect x="418" y="457" width="1348" height="24" fill="#b3b6b6"/>
<rect x="418" y="481" width="1348" height="454" fill="#c0c3c3"/>

<!-- grid -->
<use href="#gl" x="418"/><use href="#gl" x="584"/><use href="#gl" x="750"/><use href="#gl" x="916"/>
<use href="#gd" x="418"/><use href="#gd" x="584"/><use href="#gd" x="750"/><use href="#gd" x="916"/>
<path d="M1082.5 162v773M1098.6 162v773M1115 162v773M1133 162v773M1152 162v773M1168.5 162v773M1187 162v773M1204 162v773" stroke="#70767a" fill="none"/>
<path d="M1090.8 162v773M1106.9 162v773M1124 162v773M1142.5 162v773M1160 162v773M1178 162v773M1195.5 162v773M1212.5 162v773" stroke="#a4a8a8" fill="none"/>
<use href="#gl" x="1220.6"/><use href="#gl" x="1386.6"/><use href="#gl" x="1552.6"/><path d="M1727 162v773M1743.6 162v773M1760.2 162v773" stroke="#a4a8a8" fill="none"/>
<use href="#gd" x="1220.6"/><use href="#gd" x="1386.6"/><use href="#gd" x="1552.6"/><path d="M1718.6 162v773M1735.2 162v773M1751.8 162v773" stroke="#70767a" fill="none"/>

<!-- ruler -->
<use href="#tk" x="418"/><use href="#tk" x="584"/><use href="#tk" x="750"/><use href="#tk" x="916"/>
<path d="M1082.5 155v7M1090.8 159v3M1098.6 155v7M1106.9 159v3M1115 155v7M1124 159v3M1133 155v7M1142.5 159v3M1152 155v7M1160 159v3M1168.5 155v7M1178 159v3M1187 155v7M1195.5 159v3M1204 155v7M1212.5 159v3" stroke="#a0a4a4" fill="none"/>
<use href="#tk" x="1220.6"/><use href="#tk" x="1386.6"/><use href="#tk" x="1552.6"/>
<path d="M418.5 124v38M551 135v27M684 135v27M816.5 135v27M949 135v27M1082 135v27M1220.5 135v27M1353.5 135v27M1486 135v27M1618.5 135v27M1751 135v27" stroke="#a8acac" fill="none"/>
<path d="M1115.5 124v11M1152.5 124v11M1188.5 124v11" stroke="#b0b4b4" fill="none"/>
<g fill="#b8bcbc" font-size="11.5" font-weight="bold" letter-spacing=".1"><text x="422" y="134">111</text><text x="1118" y="134">97</text><text x="1155" y="134">107</text><text x="1192" y="134">111</text></g>
<g fill="#b4b8b8" font-size="13" font-weight="bold"><text x="423" y="149">1</text><text x="555" y="149">5</text><text x="687" y="149">9</text><text x="820" y="149">13</text><text x="953" y="149">17</text><text x="1085" y="149">21</text><text x="1224" y="149">25</text><text x="1357" y="149">29</text><text x="1489" y="149">33</text><text x="1622" y="149">37</text><text x="1755" y="149">41</text></g>
<rect x="584" y="157" width="531" height="5" fill="#a8f6f8"/>
<path d="M584 152h10l-10 10zM1115 152h-10l10 10z" fill="#9fabab"/>
<path d="M478 138h13l-6.500 7z" fill="none" stroke="#cfeeee"/>
<path d="M484.500 145V935" stroke="#5a2c2c" fill="none"/>

<!-- envelope -->
<path d="M418 210.500H1115V214.500H1152V212.500H1188V210.500H1765" fill="none" stroke="#18f5f8" stroke-width="1"/>
<circle cx="1114" cy="214" r="2.300" fill="none" stroke="#18f5f8" stroke-width="1.200"/><circle cx="1152" cy="212" r="2.300" fill="none" stroke="#18f5f8" stroke-width="1.200"/><circle cx="1187" cy="210" r="2.600" fill="#18f5f8"/>

<!-- ghost wave -->
<g style="color:#b0b4b4"><use href="#vo" y="251.5"/><use href="#vp" y="251.5"/></g>

<!-- purple track -->
<rect x="484.500" y="265.500" width="1282" height="20" fill="url(#gv)" stroke="#5a4280"/>
<path d="M484 275H1766" stroke="#3e2c5c" stroke-width="2"/>
<g style="color:#43305f"><use href="#vp" y="275"/></g>
<path d="M1115 265.500v20M1152 265.500v20M1188 265.500v20" stroke="#e8daf8" stroke-width=".8"/>
<path d="M1115 285v-5l5 5zM1152 285v-5l5 5zM1188 285v-5l5 5zM485 285v-5l5 5z" fill="#e6d8f8"/>
<!-- teal track -->
<rect x="484.500" y="289.500" width="1282" height="20" fill="url(#gt)" stroke="#7ea49c"/>
<path d="M484 299.500H1766" stroke="#384846" stroke-width="2"/>
<g style="color:#48605e"><use href="#vo" y="299.5"/></g>
<path d="M1115 289.500v20M1152 289.500v20M1188 289.500v20" stroke="#dff" stroke-width=".8"/>
<path d="M1115 309v-5l5 5zM1152 309v-5l5 5zM1188 309v-5l5 5zM485 309v-5l5 5z" fill="#e2faf4"/>

<!-- BD -->
<use href="#b16" x="584" y="313"/><use href="#b16" x="849" y="313"/>
<use href="#b16" x="1187" y="313"/><use href="#b4" x="1452" y="313"/><use href="#b4" x="1518" y="313"/><use href="#b4" x="1584" y="313"/>
<!-- SD -->
<use href="#s4" x="600" y="337"/><use href="#s4" x="733" y="337"/><use href="#s4" x="866" y="337"/><use href="#s4" x="999" y="337"/>
<use href="#s4" x="1203" y="337"/><use href="#s4" x="1336" y="337"/><use href="#s4" x="1469" y="337"/><use href="#s1" x="1602" y="337"/><use href="#s1" x="1635" y="337"/>
<!-- hats -->
<use href="#h1" x="584" y="361"/><use href="#h1" x="717" y="361"/><use href="#h1" x="849.5" y="361"/><use href="#h1" x="982" y="361"/>

<!-- doira 1 -->
<rect x="584.500" y="385.500" width="530" height="20" rx="3" fill="url(#gg)" stroke="#2f9a38"/>
<g style="color:#25492b"><use href="#w1" x="585" y="386"/><use href="#w1" x="651" y="386"/><use href="#w1" x="717" y="386"/><use href="#w1" x="784" y="386"/><use href="#w1" x="850" y="386"/><use href="#w1" x="916" y="386"/><use href="#w1" x="982" y="386"/><use href="#w1" x="1049" y="386"/></g>
<path d="M651 385.500v20M717 385.500v20M784 385.500v20M850 385.500v20M916 385.500v20M982 385.500v20M1049 385.500v20" stroke="#8fe08f" stroke-width=".8"/>
<path d="M585 405v-5l5 5zM651 405v-5l5 5zM717 405v-5l5 5zM784 405v-5l5 5zM850 405v-5l5 5zM916 405v-5l5 5zM982 405v-5l5 5zM1049 405v-5l5 5z" fill="#d6f8d6"/>
<!-- doira 2 -->
<rect x="584.500" y="409.500" width="530" height="20" rx="3" fill="url(#gg)" stroke="#2f9a38"/>
<g style="color:#25492b"><use href="#w2" x="585" y="410"/><use href="#w2" x="651" y="410"/><use href="#w2" x="717" y="410"/><use href="#w2" x="784" y="410"/><use href="#w2" x="850" y="410"/><use href="#w2" x="916" y="410"/><use href="#w2" x="982" y="410"/><use href="#w2" x="1049" y="410"/></g>
<path d="M651 409.500v20M717 409.500v20M784 409.500v20M850 409.500v20M916 409.500v20M982 409.500v20M1049 409.500v20" stroke="#8fe08f" stroke-width=".8"/>
<path d="M585 429v-5l5 5zM651 429v-5l5 5zM717 429v-5l5 5zM784 429v-5l5 5zM850 429v-5l5 5zM916 429v-5l5 5zM982 429v-5l5 5zM1049 429v-5l5 5z" fill="#d6f8d6"/>
<!-- doira 3 -->
<rect x="584.500" y="433.500" width="530" height="20" rx="3" fill="url(#gp)" stroke="#7a3c6a"/>
<g style="color:#4a2a4c"><use href="#w2" x="585" y="434"/><use href="#w2" x="651" y="434"/><use href="#w2" x="717" y="434"/><use href="#w2" x="784" y="434"/><use href="#w2" x="850" y="434"/><use href="#w2" x="916" y="434"/><use href="#w2" x="982" y="434"/><use href="#w2" x="1049" y="434"/></g>
<path d="M717 433.500v20M850 433.500v20M982 433.500v20" stroke="#f0c8e4" stroke-width=".8"/>
<path d="M585 453v-5l5 5zM717 453v-5l5 5zM850 453v-5l5 5zM982 453v-5l5 5z" fill="#f8d8f0"/>
<!-- blue 1 -->
<rect x="1187.500" y="385.500" width="464" height="20" rx="3" fill="url(#gb)" stroke="#2a3098"/>
<g style="color:#1d2270"><use href="#w1" x="1188" y="386"/><use href="#w1" x="1254" y="386"/><use href="#w1" x="1320" y="386"/><use href="#w1" x="1386" y="386"/><use href="#w1" x="1452" y="386"/><use href="#w1" x="1518" y="386"/><use href="#w1" x="1584" y="386"/></g>
<rect x="1187.500" y="409.500" width="464" height="20" rx="3" fill="url(#gb)" stroke="#2a3098"/>
<g style="color:#1d2270"><use href="#w2" x="1188" y="410"/><use href="#w2" x="1254" y="410"/><use href="#w2" x="1320" y="410"/><use href="#w2" x="1386" y="410"/><use href="#w2" x="1452" y="410"/><use href="#w2" x="1518" y="410"/><use href="#w2" x="1584" y="410"/></g>
<rect x="1187.500" y="433.500" width="464" height="20" rx="3" fill="url(#gb)" stroke="#2a3098"/>
<g style="color:#1d2270"><use href="#w2" x="1188" y="434"/><use href="#w2" x="1254" y="434"/><use href="#w2" x="1320" y="434"/><use href="#w2" x="1386" y="434"/><use href="#w2" x="1452" y="434"/><use href="#w2" x="1518" y="434"/><use href="#w2" x="1584" y="434"/></g>
<path d="M1253 385.500v20M1385 385.500v20M1518 385.500v20M1253 409.500v20M1385 409.500v20M1518 409.500v20M1253 433.500v20M1385 433.500v20M1518 433.500v20" stroke="#a8acf0" stroke-width=".8"/>
<path d="M1188 405v-5l5 5zM1253 405v-5l5 5zM1385 405v-5l5 5zM1518 405v-5l5 5zM1188 429v-5l5 5zM1253 429v-5l5 5zM1385 429v-5l5 5zM1518 429v-5l5 5zM1188 453v-5l5 5zM1253 453v-5l5 5zM1385 453v-5l5 5zM1518 453v-5l5 5z" fill="#d8dcff"/>

<!-- bass -->
<rect x="584.500" y="457.500" width="530" height="20" rx="3" fill="#6e4f96" stroke="#4a3a66"/>
<path d="M849 457.500v20" stroke="#bda8dc" stroke-width=".8"/>
<path d="M585 477v-5l5 5zM849 477v-5l5 5z" fill="#e0d4f4"/>
<path stroke="#24183a" stroke-width="3" fill="none" d="M585.300 473.300H594.700M595.900 469.300H607M607 466.700H618M629.400 466.700H633.500M640.400 469.300H650.600M662.900 467.700H668M673.400 470.300H683.700M695.500 470.300H700.800M706.900 474.700H717M717.900 472H727.300M728.100 469.300H738.700M739.500 466.700H749.700M762 466.700H767.300M773 469.300H783.600M795.400 467.700H800.700M806.400 470.300H817M828.500 470.300H833.400M839.500 472.300H848.900M849 470.700H860M860.700 466.700H871.300M872 463.300H882.300M893.700 470.300H899.500M904.800 473.300H915M927.200 469.300H932.500M937.800 472.300H948.400M960.700 473.300H966M971.300 472.300H982M982.700 470H992.500M993.700 466.700H1004.700M1004.700 463.300H1015.300M1027 470.300H1032M1038.200 473.300H1048.400M1059.800 469.300H1065M1070.800 472.300H1081.400M1093.300 473.300H1098.600M1104 472.300H1113.300"/>
<rect x="711" y="472" width="10" height="5" fill="#c8c8c8" stroke="#333" stroke-width=".8"/><rect x="977" y="472" width="10" height="5" fill="#c8c8c8" stroke="#333" stroke-width=".8"/>

<!-- piano -->
<rect x="584.500" y="481.500" width="530" height="20" rx="3" fill="#68672a" stroke="#4a4a22"/>
<path fill="#1e1e14" d="M585 486h7v5h-7zM585 497h7v3h-7zM640 486h9v5h-9zM650 486h7v5h-7zM633 497h15v3h-15zM650 497h7v3h-7zM682 487h9v5h-9zM682 495h9v3h-9zM716 486h8v5h-8zM716 497h8v3h-8zM773 486h9v5h-9zM783 486h6v5h-6zM766 497h15v3h-15zM782 497h7v3h-7zM816 487h8v5h-8zM816 495h8v3h-8zM848 487h8v5h-8zM848 495h8v3h-8zM905 487h9v5h-9zM915 486h7v5h-7zM899 495h15v3h-15zM915 494h8v3h-8zM948 486h8v5h-8zM948 497h8v3h-8zM981 487h8v5h-8zM981 495h8v3h-8zM1037 487h10v5h-10zM1048 486h7v5h-7zM1030 495h16v3h-16zM1048 494h7v3h-7zM1081 486h8v5h-8zM1081 497h8v3h-8z"/>
<rect x="844.500" y="496" width="10" height="5" fill="#5c5c5c" stroke="#222" stroke-width=".8"/>

<!-- cursor -->
<rect x="765.500" y="667.500" width="9" height="9" fill="none" stroke="#111" stroke-dasharray="1 1"/>
<path d="M770 672v13l3-3 2.500 5.500 2.500-1-2.500-5.500h4.500z" fill="#fff" stroke="#000" stroke-width=".9"/>

<!-- v scrollbar -->
<circle cx="1773" cy="171" r="5.500" fill="#c8c8c8" stroke="#333"/><path d="M1773 168l-3 5h6z" fill="#222"/>
<rect x="1767.500" y="182" width="11" height="693" rx="5" fill="#333" stroke="#1c1c1c"/>
<circle cx="1773" cy="887" r="5.500" fill="#c8c8c8" stroke="#333"/><path d="M1773 890l-3-5h6z" fill="#222"/>
<circle cx="1773" cy="904" r="5.500" fill="#c8c8c8" stroke="#333"/><path d="M1770 904h6M1773 901v6" stroke="#222"/>
<circle cx="1773" cy="925" r="5.500" fill="#c8c8c8" stroke="#333"/><path d="M1770 925h6" stroke="#222"/>
<!-- h scrollbar -->
<circle cx="426.500" cy="942.500" r="5.500" fill="#c8c8c8" stroke="#333"/><path d="M424 942.500l4-3v6z" fill="#222"/>
<rect x="437.500" y="937.500" width="408" height="11" rx="5" fill="url(#gs)" stroke="#1a1a1a"/>
<circle cx="443" cy="943" r="3" fill="#ddd"/><circle cx="840" cy="943" r="3" fill="#ddd"/><path d="M641.500 939v8" stroke="#777"/>
<circle cx="1718" cy="943" r="5.500" fill="#c8c8c8" stroke="#333"/><path d="M1721 943l-4-3v6z" fill="#222"/>
<circle cx="1735" cy="943" r="5.500" fill="#c8c8c8" stroke="#333"/><path d="M1732 943h6M1735 940v6" stroke="#222"/>
<circle cx="1756" cy="943" r="5.500" fill="#c8c8c8" stroke="#333"/><path d="M1753 943h6" stroke="#222"/>
</svg>

<!-- icons svg -->
<svg width="1902" height="986" viewBox="0 0 1902 986" xmlns="http://www.w3.org/2000/svg" font-family="Liberation Sans, sans-serif" fill="none" stroke-width="1">
<!-- small strip icons -->
<path d="M375.500 197a3.500 3.500 0 1 0 5 0M378 194.500v5" stroke="#123f1c" stroke-width="1.300"/>
<path d="M6 539a3.500 3.500 0 1 0 5 0M8.500 536.500v5" stroke="#1d7a33" stroke-width="1.300"/>
<path d="M1804 637a3.500 3.500 0 1 0 5 0M1806.500 634.500v5" stroke="#1d7a33" stroke-width="1.300"/>
<path d="M49 680v8l8-4z" fill="#1e5a2e"/>
<path d="M86 226l5-5 5 5" stroke="#444" stroke-width="1.500"/>
<path d="M48 725l5-5 5 5" stroke="#444" stroke-width="1.500"/>
<path d="M1888 758l5-5 5 5" stroke="#444" stroke-width="1.500"/>
<path d="M397 246h8l-4 6z" fill="#333"/>
<path d="M1893 957v16M1898 957v16M1890 966h6M1895 962h6" stroke="#bbb" stroke-width="1.200"/>
<!-- transport glyphs -->
<path d="M395 10v28M424 10v28M454 10v28M484 10v28" stroke="#1a1a1a"/>
<path d="M376 19h3v11h-3zM386 19v11l-7-5.500z" fill="#b0b3b3"/>
<rect x="405" y="19" width="10" height="10" fill="#b0b3b3"/>
<path d="M434 18l13 6.500-13 6.500z" fill="#b0b3b3"/>
<path d="M464 19h3v11h-3zM470 19h3v11h-3z" fill="#b0b3b3"/>
<path d="M492 19v11l7-5.500zM499 19h3v11h-3z" fill="#b0b3b3"/>
<circle cx="531" cy="24" r="14.500" fill="#2d2d2d"/><circle cx="531" cy="24" r="13" fill="#7d4040"/>
<circle cx="531" cy="24" r="5" stroke="#d8b8b8" stroke-width="2.200" stroke-dasharray="11 3"/>
<circle cx="565" cy="24" r="14.500" fill="#2d2d2d"/><circle cx="565" cy="24" r="13" fill="#2d7c3a"/>
<circle cx="565" cy="24" r="5" stroke="#9fe8b0" stroke-width="2.200" stroke-dasharray="11 3"/>
<rect x="2" y="31" width="13" height="5" fill="#555"/><path d="M4 36l4-4 4 4" stroke="#888"/>

<!-- toolbar icons -->
<g stroke="#9a9d9d"><rect x="9" y="64" width="8" height="11"/><path d="M12 64v-3h8v11h-3"/></g>
<path d="M42 59h3v8h3l1 5 -4 2-2 2-3-1-3-1 2-6h3z" fill="#b0b3b3"/>
<g fill="#888"><path d="M64 62h20v3H64zM64 66h20v3H64zM64 75h20v3H64zM64 79h20v1H64z"/><path d="M64 71h20v3H64z" fill="#3f9a58"/></g><path d="M70 61v20M77 61v20" stroke="#444"/>
<rect x="92" y="59" width="12" height="6" fill="#35b558"/><rect x="98" y="67" width="11" height="5" fill="#888"/><rect x="103" y="74" width="13" height="6" fill="#bbb"/><path d="M105 61q5 0 6 6" stroke="#35b558" stroke-width="1.500"/><path d="M109 66l2 4 2-4z" fill="#35b558"/>
<circle cx="129" cy="64" r="6.500" stroke="#c8cccc"/><path d="M129 60v4l3 2" stroke="#c8cccc"/><path d="M134 80l7-8 6 6" stroke="#c8cccc"/><circle cx="134" cy="80" r="2" fill="#666" stroke="#ddd"/><circle cx="141" cy="72" r="2" fill="#666" stroke="#ddd"/><circle cx="146" cy="78" r="2" fill="#666" stroke="#ddd"/>
<path d="M161 61h9l3 3 3 0v9h-12z" stroke="#aaa"/><path d="M164 58h7l2 3" stroke="#aaa"/><path d="M153 73h5l2 2h4v6h-11z" fill="#2fb256"/><path d="M155 68v-6l-3 3M155 62l3 3" stroke="#aaa"/>
<path d="M787 62q6-5 12 0q-6 5-12 0z" fill="#2f9a50" stroke="#35b558"/><circle cx="793" cy="62" r="1.500" fill="#111"/><path d="M795 78l6-7 5 6" stroke="#ccc"/><circle cx="794" cy="78" r="2" stroke="#ccc"/><circle cx="801" cy="71" r="2" stroke="#ccc"/><circle cx="806" cy="78" r="2" stroke="#ccc"/>
<rect x="817" y="58" width="15" height="14" fill="#7a7d7d"/><path d="M819 69l5-7 5 7" stroke="#7a4a8a" stroke-width="2"/>
<rect x="847" y="58" width="15" height="14" fill="#7a7d7d"/><path d="M849 69l5-7 5 7" stroke="#3f8a58" stroke-width="2"/>
<rect x="880" y="58" width="9" height="16" rx="4.500" fill="#b5b8b8"/><path d="M877 67q0 10 8 10q8 0 8-10M885 77v4M880 81h10" stroke="#aaa" stroke-width="1.500"/>
<path d="M934 59h19v17h-19z" fill="#c8cbcb"/><path d="M938 59h2v10h-2zM943 59h2v10h-2zM948 59h2v10h-2z" fill="#111"/><path d="M937 69v7M941.500 69v7M946 69v7M950.500 69v7" stroke="#444"/>
<path d="M970 63h9M970 63l3-3M970 63l3 3M970 67h9" stroke="#2fb256" stroke-width="1.500"/><path d="M963 73h7l2-2 2 4 2-5 2 5 2-4 2 5 2-8 2 8" stroke="#bbb"/>
<path d="M1060 59v10M1055 64h10M1057 61l6 6M1063 61l-6 6" stroke="#8ab8de"/><rect x="1066" y="71" width="13" height="6" fill="#8a9a9a"/>
<rect x="1089" y="62" width="11" height="7" fill="#35b558"/><path d="M1094 58v2M1094 71v2M1085 65h3M1101 65h3" stroke="#aaa"/><path d="M1083 72q5-2 8 0t8 0M1083 76q5-2 8 0t8 0M1083 80q5-2 8 0" stroke="#bbb"/><path d="M1100 70q5 4 2 9h-5" stroke="#35b558"/>
<g stroke="#bbb" stroke-width="1.500"><path d="M1139 60v17"/><path d="M1139 60q3 3 6 5"/></g><ellipse cx="1135.500" cy="77" rx="3.500" ry="2.500" fill="#bbb"/><path d="M1147 70v8" stroke="#35b558" stroke-width="1.500"/><path d="M1144 76l3 4 3-4z" fill="#35b558"/>
<g stroke="#9da0a0" stroke-width="2.500"><path d="M1165 60h11M1165 68.500h11M1165 77h11M1164 62v5M1164 70v5M1177 62v5M1177 70v5"/></g>
<g stroke="#bbb" stroke-width="1.500"><path d="M1199 60v17"/><path d="M1199 60q3 3 6 5"/></g><ellipse cx="1195.500" cy="77" rx="3.500" ry="2.500" fill="#bbb"/><path d="M1207 72v-8" stroke="#35b558" stroke-width="1.500"/><path d="M1204 66l3-4 3 4z" fill="#35b558"/>
<g stroke="#bbb" stroke-width="1.500"><path d="M1242 60v17"/><path d="M1242 60q3 3 6 5M1272 60v17M1272 60q3 3 6 5"/></g><ellipse cx="1238.500" cy="77" rx="3.500" ry="2.500" fill="#bbb"/><ellipse cx="1268.500" cy="77" rx="3.500" ry="2.500" fill="#bbb"/><text x="1246" y="63" font-size="8" fill="#bbb">8va</text><text x="1276" y="80" font-size="8" fill="#bbb">8</text><path d="M1250 68v8M1279 74v-10" stroke="#35b558" stroke-width="1.500"/><path d="M1247 74l3 4 3-4zM1276 66l3-4 3 4z" fill="#35b558"/>
<g stroke="#bbb"><circle cx="1322" cy="64" r="5"/><path d="M1326 68l5 5M1308 76l2-2 2 5 2-8 2 7 2-3 2 2" /><circle cx="1352" cy="64" r="5"/><path d="M1356 68l5 5M1338 76l2-2 2 5 2-8 2 7 2-3 2 2"/></g><path d="M1319 64h6" stroke="#e06060"/><path d="M1349 64h6M1352 61v6" stroke="#4fcf6f"/>
<path d="M1374 60v10M1371 67l3 4 3-4M1381 63h6M1404 70v-10M1401 63l3-4 3 4M1411 63h6M1414 60v6" stroke="#ddd"/><path d="M1377 79v-1M1380 79v-3M1383 79v-5M1386 79v-7M1389 79v-9M1407 79v-1M1410 79v-3M1413 79v-5M1416 79v-7M1419 79v-9" stroke="#7b94c9" stroke-width="1.500"/>
<rect x="1429" y="58" width="3" height="12" fill="#c04040"/><rect x="1432" y="58" width="3" height="12" fill="#c09040"/><rect x="1435" y="58" width="3" height="12" fill="#60b040"/><rect x="1438" y="58" width="3" height="12" fill="#4060c0"/><rect x="1441" y="58" width="3" height="12" fill="#8040c0"/><path d="M1451 59l-9 14" stroke="#c0b080" stroke-width="2"/><rect x="1432" y="75" width="14" height="5" fill="#5f8a80"/>
<path d="M1578 56h20M1578 81h20" stroke="#bbb" stroke-dasharray="1 1"/><path d="M1578 69h3l2-4 2 8 2-10 2 9 2-4 2 1h4" stroke="#bbb"/><path d="M1586 61l2-3 2 3zM1586 77l2 3 2-3z" fill="#35b558"/>
<rect x="1670" y="58" width="8" height="5" fill="#35b558"/><rect x="1678" y="66" width="8" height="5" fill="#35b558"/><rect x="1670" y="75" width="8" height="5" fill="#35b558"/><path d="M1669 68l4-2v4zM1690 68l-4-2v4z" fill="#bbb"/><path d="M1680 82v-7l2-2v-3h2v3h4q2 1 1 7l-2 2z" fill="#ccc"/>
<rect x="1699" y="58" width="10" height="9" fill="#6f7f9f"/><path d="M1713 66l4-4v4zM1720 61h5M1722.500 58v5M1704 78l6-6 4 4" stroke="#9ab0c8"/><circle cx="1704" cy="78" r="2" stroke="#9ab0c8"/><circle cx="1710" cy="72" r="2" stroke="#9ab0c8"/><circle cx="1716" cy="78" r="2" stroke="#9ab0c8"/>
<path d="M1739 58v24M1729 69h20" stroke="#bbb" stroke-dasharray="1 1.500"/><path d="M1734 64v10M1744 62v14" stroke="#bbb" stroke-dasharray="1 1"/>
<circle cx="1763" cy="68" r="5.500" fill="#ccc"/><circle cx="1776" cy="68" r="5.500" fill="#ccc"/><circle cx="1763" cy="68" r="1.500" fill="#333"/><circle cx="1776" cy="68" r="1.500" fill="#333"/><path d="M1765 74h9" stroke="#ccc"/>
<rect x="1789" y="60" width="21" height="15" rx="1" stroke="#c8c8c8" stroke-width="1.500"/><circle cx="1795" cy="66" r="1.500" fill="#ccc"/><circle cx="1804" cy="66" r="1.500" fill="#ccc"/><path d="M1793 72h13" stroke="#ccc"/>
<path d="M1823 72l6-14 11 6-6 14z" stroke="#c8c8c8"/><path d="M1827 78l4-12 7 4" stroke="#888"/><path d="M1830 73v-6l4 2" stroke="#ccc"/>
<rect x="1849" y="58" width="11" height="15" fill="#6f8080"/><path d="M1852 62h6l-3 6" stroke="#222"/><path d="M1866 62v6" stroke="#ddd" stroke-width="1.500"/><path d="M1863 66l3 4 3-4z" fill="#ddd"/><path d="M1850 78h20" stroke="#d98a2a" stroke-width="1.500"/><path d="M1855 75l4 3-4 3zM1861 75l4 3-4 3zM1867 75l4 3-4 3z" fill="#d98a2a"/>
<circle cx="1884" cy="73" r="7" fill="#ccc"/><circle cx="1881" cy="70" r="1.500" fill="#333"/><circle cx="1887" cy="70" r="1.500" fill="#333"/><circle cx="1881" cy="76" r="1.500" fill="#333"/><circle cx="1887" cy="76" r="1.500" fill="#333"/><path d="M1895 62q4 0 4 6v10q-2 4-4 0z" fill="#35b558"/>

<!-- tcp toolbar icons -->
<path d="M83 113l2 11h9v-10z" fill="#aaa" opacity=".8"/><circle cx="89" cy="118" r="2.500" fill="#333"/><path d="M93 112l7-6M96 104l5 0 0 5z" stroke="#35b558" fill="#35b558" stroke-width="1.500"/>
<rect x="119" y="111" width="10" height="13" fill="#35a858" opacity=".8"/><circle cx="124" cy="118" r="2.500" fill="#333"/><path d="M111 104l6-3 4 4h8v6M112 108v3" stroke="#bbb"/>
<path d="M141 111h5l3 3v8h-8z" stroke="#ccc"/><circle cx="158" cy="106" r="6" fill="#4f6d6d"/><text x="156" y="110" font-size="10" fill="#cdd">i</text>
<path d="M178 101h5l5 22h-15z" stroke="#bbb"/><path d="M172 106l10 14" stroke="#35b558" stroke-width="2"/>
<rect x="201" y="104" width="7" height="12" fill="#5f8a8a"/><path d="M208 102l11 16h-11z" fill="#35a858"/><rect x="212" y="112" width="8" height="9" fill="#5f8a8a"/>
<path d="M235 108l6-6 6 6" stroke="#ddd"/><circle cx="235" cy="108" r="1.500" fill="#ddd"/><circle cx="241" cy="102" r="1.500" fill="#ddd"/><circle cx="247" cy="108" r="1.500" fill="#ddd"/><rect x="235" y="115" width="12" height="6" fill="#49908a"/><path d="M229 112l4-2v4zM253 112l-4-2v4z" fill="#ddd"/>
<path d="M262 103v20M266 103v20M270 103v20M274 103v20M278 103v20M282 103v20" stroke="#ccc" stroke-dasharray="1.500 1"/>
<path d="M294 103h8q8 0 8 9t-8 9h-8" stroke="#5ef07e" stroke-width="2.500"/><rect x="291" y="103" width="5" height="18" stroke="#b0b4b4" fill="none"/>
<path d="M323 110h9v-3l6 6-6 6v-3h-9z" fill="#aaa"/><path d="M339 102v22" stroke="#aaa"/>
</svg>

</div></body></html>
